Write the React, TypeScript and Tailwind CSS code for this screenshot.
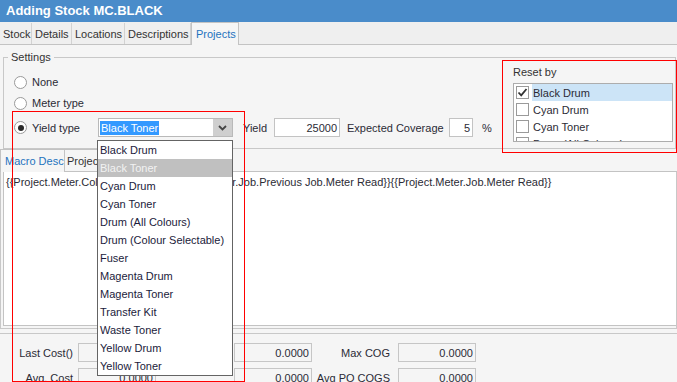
import React from 'react';

const tabs = [
  { label: 'Stock', w: 'w-[32px]' },
  { label: 'Details', w: 'w-[40px]' },
  { label: 'Locations', w: 'w-[53px]' },
  { label: 'Descriptions', w: 'w-[66px]' },
];

const yieldTypes = [
  'Black Drum',
  'Black Toner',
  'Cyan Drum',
  'Cyan Toner',
  'Drum (All Colours)',
  'Drum (Colour Selectable)',
  'Fuser',
  'Magenta Drum',
  'Magenta Toner',
  'Transfer Kit',
  'Waste Toner',
  'Yellow Drum',
  'Yellow Toner',
];

const resetBy = [
  { label: 'Black Drum', checked: true },
  { label: 'Cyan Drum', checked: false },
  { label: 'Cyan Toner', checked: false },
  { label: 'Drum (All Colours)', checked: false },
];

function Radio({ checked }: { checked?: boolean }) {
  return (
    <span className="flex h-[13px] w-[13px] shrink-0 items-center justify-center rounded-full border border-[#9a9a9a] bg-white">
      {checked && <span className="h-[6px] w-[6px] rounded-full bg-[#2a2a2a]" />}
    </span>
  );
}

function Checkbox({ checked }: { checked?: boolean }) {
  return (
    <span className="flex h-[13px] w-[13px] shrink-0 items-center justify-center border border-[#9a9a9a] bg-white">
      {checked && (
        <svg width="11" height="11" viewBox="0 0 11 11">
          <path d="M1.5 5.5 L4.2 8.3 L9.5 2" fill="none" stroke="#333" strokeWidth="1.8" />
        </svg>
      )}
    </span>
  );
}

function ReadOnlyBox({ value, w }: { value: string; w: string }) {
  return (
    <div className={`${w} flex h-[19px] items-center justify-end border border-[#c6c6c6] bg-[#f5f5f5] pr-[2px]`}>
      {value}
    </div>
  );
}

export default function App() {
  return (
    <div className="relative h-[382px] w-[677px] overflow-hidden bg-[#f5f5f5] font-['Liberation_Sans',Arial,sans-serif] text-[11px] leading-[14px] text-[#2b2b35]">
      {/* Title */}
      <div className="flex h-[22px] items-center bg-[#4a8cca] pl-[6px] text-[13px] font-bold text-white">
        Adding Stock MC.BLACK
      </div>

      {/* Main tabs */}
      <div className="flex h-[23px] items-end border-b border-[#c3c3c3] bg-[#efefef]">
        {tabs.map((t) => (
          <div
            key={t.label}
            className={`${t.w} flex h-[21px] items-center border-r border-[#d2d2d2] pl-[3px] text-[#333]`}
          >
            {t.label}
          </div>
        ))}
        <div className="-mb-px flex h-[23px] w-[48px] items-center border border-b-0 border-[#c3c3c3] bg-[#f5f5f5] pl-[4px] text-[#1e73be]">
          Projects
        </div>
      </div>

      {/* Settings group */}
      <fieldset className="ml-[3px] mt-[6px] h-[98px] w-[673px] border border-[#c8c8c8] p-0">
        <legend className="ml-[4px] px-[3px] leading-[13px] text-[#333]">Settings</legend>
        <div className="flex">
          <div className="flex-1 pl-[10px]">
            <div className="mt-[8px] flex h-[20px] items-center gap-[5px]">
              <Radio />
              <span>None</span>
            </div>
            <div className="mt-[1px] flex h-[20px] items-center gap-[5px]">
              <Radio />
              <span>Meter type</span>
            </div>
            <div className="mt-[5px] flex h-[19px] items-center">
              <Radio checked />
              <span className="ml-[5px] w-[66px]">Yield type</span>
              <div className="flex h-[19px] w-[135px] items-center border border-[#b9b9b9] bg-white">
                <span className="ml-[1px] bg-[#3399ff] px-[1px] leading-[14px] text-white">Black Toner</span>
                <span className="ml-auto flex h-full w-[19px] items-center justify-center bg-[#cfcfcf]">
                  <svg width="9" height="6" viewBox="0 0 9 6">
                    <path d="M1 1 L4.5 4.5 L8 1" fill="none" stroke="#444" strokeWidth="1.8" />
                  </svg>
                </span>
              </div>
              <span className="ml-[10px] w-[31px]">Yield</span>
              <div className="flex h-[19px] w-[66px] items-center justify-end border border-[#c3c3c3] bg-white pr-[2px]">
                25000
              </div>
              <span className="ml-[7px] w-[102px]">Expected Coverage</span>
              <div className="flex h-[19px] w-[24px] items-center justify-end border border-[#c3c3c3] bg-white pr-[2px]">
                5
              </div>
              <span className="ml-[9px]">%</span>
            </div>
          </div>

          <div className="mr-[2px] w-[160px]">
            <div className="mt-[1px] leading-[14px] text-[#333]">Reset by</div>
            <div className="mt-[4px] h-[59px] overflow-hidden border border-[#adadad] bg-white">
              {resetBy.map((r) => (
                <div key={r.label} className="flex h-[17px] items-center">
                  <span className="ml-[2px]">
                    <Checkbox checked={r.checked} />
                  </span>
                  <span
                    className={`ml-[3px] flex h-full flex-1 items-center pl-[1px] ${r.checked ? 'bg-[#cce4f7]' : ''}`}
                  >
                    {r.label}
                  </span>
                </div>
              ))}
            </div>
          </div>
        </div>
      </fieldset>

      {/* Macro tabs */}
      <div className="flex h-[23px] items-end border-b border-[#c3c3c3]">
        <div className="-mb-px flex h-[23px] w-[65px] items-center border border-b-0 border-[#c3c3c3] bg-[#f5f5f5] pl-[4px] text-[#1e73be]">
          Macro Desc
        </div>
        <div className="flex h-[22px] w-[62px] items-center border-r border-t border-[#c3c3c3] pl-[2px] text-[#333]">
          Projects
        </div>
      </div>
      <div className="h-[157px] border-x border-b border-[#c8c8c8] pb-[2px] pl-[2px]">
        <div className="h-full border-b border-l border-[#c3c3c3] bg-white pl-[2px] pt-[3px]">
          {'{{Project.Meter.Colour Count}} - {{Project.Meter.Job.Previous Job.Meter Read}}{{Project.Meter.Job.Meter Read}}'}
        </div>
      </div>

      {/* Cost fields */}
      <div className="mt-[4px] border-t border-[#c8c8c8] pt-[9px]">
        <div className="flex h-[19px] items-center">
          <span className="w-[73px] text-right">Last Cost()</span>
          <span className="ml-[5px]">
            <ReadOnlyBox value="0.0000" w="w-[78px]" />
          </span>
          <span className="w-[73px] text-right">Last PO Cost</span>
          <span className="ml-[5px]">
            <ReadOnlyBox value="0.0000" w="w-[78px]" />
          </span>
          <span className="w-[78px] text-right">Max COG</span>
          <span className="ml-[8px]">
            <ReadOnlyBox value="0.0000" w="w-[78px]" />
          </span>
        </div>
        <div className="mt-[6px] flex h-[19px] items-center">
          <span className="w-[73px] text-right">Avg. Cost</span>
          <span className="ml-[5px]">
            <ReadOnlyBox value="0.0000" w="w-[78px]" />
          </span>
          <span className="w-[73px]" />
          <span className="ml-[5px]">
            <ReadOnlyBox value="0.0000" w="w-[78px]" />
          </span>
          <span className="w-[78px] text-right">Avg PO COGS</span>
          <span className="ml-[8px]">
            <ReadOnlyBox value="0.0000" w="w-[78px]" />
          </span>
        </div>
      </div>

      {/* Open dropdown list */}
      <div className="absolute left-[97px] top-[140px] w-[136px] border border-[#646464] bg-white">
        {yieldTypes.map((t) => (
          <div
            key={t}
            className={`flex h-[18px] items-center pl-[2px] ${t === 'Black Toner' ? 'bg-[#c0c0c0] text-[#f2f2f2]' : 'text-[#1b1b3b]'}`}
          >
            {t}
          </div>
        ))}
      </div>

      {/* Annotation boxes */}
      <div className="absolute left-[12px] top-[111px] h-[271px] w-[233px] border border-[#ff0000]" />
      <div className="absolute left-[502px] top-[60px] h-[93px] w-[175px] border border-[#ff0000]" />
    </div>
  );
}
